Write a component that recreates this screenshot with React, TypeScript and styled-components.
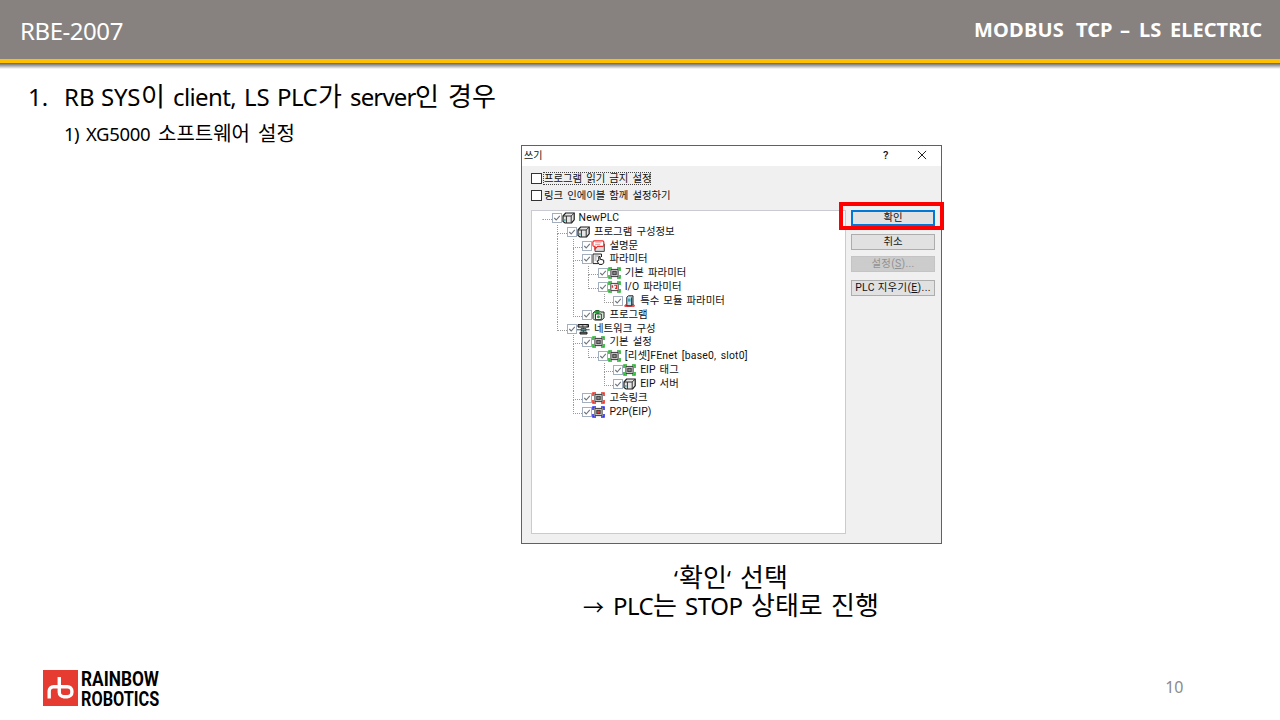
import React from 'react';
import styled, { createGlobalStyle, css } from 'styled-components';

const latin = "'Noto Sans', 'Noto Sans CJK KR', sans-serif";
const hangul = "'Noto Sans CJK KR', 'Noto Sans', sans-serif";
const dialogFont = "Roboto, 'Noto Sans CJK KR', sans-serif";

const GlobalStyle = createGlobalStyle`
  * { box-sizing: border-box; }
  body { margin: 0; background: #fff; }
`;

const Slide = styled.main`
  display: flex;
  flex-direction: column;
  width: 1280px;
  height: 720px;
  overflow: hidden;
  background: #fff;
  color: #000;
  font-family: ${latin};
`;

const Header = styled.header`
  display: flex;
  flex: none;
  justify-content: space-between;
  height: 63px;
  padding: 0 16px 0 20px;
  background: #878280;
  border-bottom: 4px solid #ffc000;
  color: #fff;
`;

const HeaderShadow = styled.div`
  flex: none;
  height: 6px;
  background: linear-gradient(#66625f, #8f8f8f 30%, #d0d0d0 70%, #fff);
`;

const ProductCode = styled.div`
  padding-top: 15px;
  font-size: 24px;
  line-height: 32px;
  letter-spacing: -0.45px;
`;

const DocTitle = styled.h1`
  display: flex;
  margin: 0;
  padding-top: 16px;
  font-size: 20px;
  line-height: 28px;
  font-weight: 700;
`;

const TextLine = styled.div<{ $height: number }>`
  display: flex;
  align-items: baseline;
  height: ${p => p.$height}px;
  line-height: ${p => p.$height}px;
`;

const Word = styled.span<{ $w: number; $size?: number; $ko?: boolean; $ls?: number }>`
  flex: none;
  width: ${p => p.$w}px;
  white-space: nowrap;
  letter-spacing: ${p => p.$ls ?? 0}px;
  ${p => p.$size && css`font-size: ${p.$size}px;`}
  ${p => p.$ko && css`font-family: ${hangul};`}
`;

const Outline = styled.section`
  flex: none;
  height: 76px;
  padding: 8px 0 0 28px;
`;

const SubLine = styled.div`
  padding: 6px 0 0 36px;
`;

const Figure = styled.figure`
  display: flex;
  flex-direction: column;
  flex: none;
  width: 421px;
  margin: 0 0 0 521px;
`;

const Dialog = styled.div`
  display: flex;
  flex-direction: column;
  width: 421px;
  height: 399px;
  background: #f0f0f0;
  border: 1px solid #606068;
  color: #111;
  font: 10.4px/14px ${dialogFont};
  word-spacing: 1.6px;
`;

const TitleBar = styled.div`
  display: flex;
  align-items: center;
  height: 20px;
  padding: 0 14px 2px 2px;
  background: #fff;
`;

const DialogTitle = styled.span`
  flex: 1;
  padding-top: 1px;
  font-size: 10px;
`;

const HelpMark = styled.span`
  width: 34px;
  padding-top: 2px;
  font-size: 11px;
  font-weight: 500;
`;

const Options = styled.div`
  display: flex;
  flex-direction: column;
  gap: 3.6px;
  height: 44px;
  padding: 6px 0 0 9px;
`;

const Option = styled.label`
  display: flex;
  align-items: center;
  gap: 1px;
  height: 13.4px;
`;

const OptionText = styled.span<{ $focus?: boolean }>`
  height: 13px;
  padding: 0 0 0 1px;
  line-height: 14px;
  white-space: nowrap;
  letter-spacing: -0.05px;
  outline: ${p => (p.$focus ? '1px dotted #444' : 'none')};
  outline-offset: -1px;
`;

const EmptyBox = styled.span`
  width: 11px;
  height: 11px;
  background: #fff;
  border: 1px solid #333;
`;

const DialogMain = styled.div`
  display: flex;
  gap: 5px;
  padding-left: 9px;
`;

const Tree = styled.div`
  width: 315px;
  height: 324px;
  padding: 0 0 0 10px;
  background: #fff;
  border: 1px solid #c9cad2;
`;

const TreeRow = styled.div`
  display: flex;
  align-items: center;
  height: 13.83px;
  white-space: nowrap;
`;

const Guide = styled.span<{ $kind: string }>`
  flex: none;
  display: flex;
  flex-direction: column;
  width: ${p => (' |'.includes(p.$kind) ? 15.4 : 9.6)}px;
  height: 13.83px;
  &::before {
    content: '';
    height: 8px;
    border-left: 1px dotted ${p => (' -'.includes(p.$kind) ? 'transparent' : '#999')};
    border-bottom: 1px dotted ${p => (' |'.includes(p.$kind) ? 'transparent' : '#999')};
  }
  &::after {
    content: '';
    flex: 1;
    border-left: 1px dotted ${p => ('|+'.includes(p.$kind) ? '#999' : 'transparent')};
  }
`;

const NodeLabel = styled.span<{ $ls?: number }>`
  padding-left: 4px;
  letter-spacing: ${p => p.$ls ?? 0}px;
`;

const Glyph = styled.svg`
  flex: none;
  display: block;
`;

const Actions = styled.div`
  position: relative;
  display: flex;
  flex-direction: column;
  width: 84px;
`;

const Button = styled.button<{ $primary?: boolean; $top?: number; $ls?: number }>`
  height: 16px;
  margin: ${p => p.$top ?? 0}px 0 0;
  padding: 0;
  background: #e1e1e1;
  border: ${p => (p.$primary ? '2px solid #0078d7' : '1px solid #adadad')};
  color: #111;
  font: inherit;
  letter-spacing: ${p => p.$ls ?? 0}px;
  line-height: ${p => (p.$primary ? 10 : 12)}px;
  white-space: nowrap;
  &:disabled {
    background: #ccc;
    border-color: #c4c4c4;
    color: #929292;
  }
`;

const Highlight = styled.span`
  position: absolute;
  top: -8px;
  left: -12px;
  width: 105px;
  height: 28px;
  border: 4px solid #f00;
  pointer-events: none;
`;

const Caption = styled.figcaption`
  padding: 18px 0 0 62px;
  font-size: 24px;
`;

const CaptionFirst = styled.div`
  padding-left: 91px;
`;

const Footer = styled.footer`
  display: flex;
  justify-content: space-between;
  align-items: flex-start;
  margin-top: auto;
  height: 50px;
  padding: 0 96.5px 0 43px;
`;

const Logo = styled.div`
  display: flex;
  gap: 3px;
`;

const LogoText = styled.div`
  width: 80px;
  margin-top: -1px;
  font: 700 20.8px/20px Roboto, sans-serif;
`;

const LogoWord = styled.div<{ $sx: number }>`
  width: max-content;
  transform: scaleX(${p => p.$sx});
  transform-origin: left;
`;

const PageNumber = styled.div`
  padding-top: 6px;
  font-size: 16px;
  line-height: 22px;
  color: #8b8b8b;
`;

const CheckIcon = () => (
  <Glyph width="10" height="10" viewBox="0 0 10 10" fill="none">
    <rect x="0.5" y="0.5" width="9" height="9" fill="#fff" stroke="#a3afbf" />
    <path d="M2.3 5 4.2 7 7.8 2.8" stroke="#6d747e" strokeWidth="1.1" />
  </Glyph>
);

type IconKind =
  | 'cube' | 'note' | 'param' | 'green' | 'io' | 'device' | 'program' | 'network' | 'red' | 'blue';

const corners = 'M1 4V1H4M9 1h3v3M12 8v3H9M4 11H1V8';

const Chip = ({ edge, core }: { edge: string; core: string }) => (
  <>
    <path d={corners} stroke={edge} strokeWidth="1.6" />
    <rect x="2.9" y="2.4" width="7.2" height="7.2" fill="#d8d8d8" stroke="#3a3a3a" />
    <rect x="4.8" y="4.3" width="3.4" height="3.4" fill={core} stroke="#333" strokeWidth=".9" />
  </>
);

const iconArt: Record<IconKind, React.ReactNode> = {
  cube: (
    <>
      <path d="M1 4 3.6 1h8.6v6.800L9.600 11H3L1 9.500z" fill="#e6e6e6" stroke="#1c1c1c" strokeWidth="1.2" />
      <path d="M1 4h8.200v7M9.200 4l3-3M4.400 4v7" stroke="#333" />
      <path d="M1.800 8h1.800" stroke="#29a3a3" strokeWidth="1.4" />
    </>
  ),
  note: (
    <>
      <path d="M3 4h9.3v7.4H3z" fill="#ddd" stroke="#444" />
      <path
        d="M2.4.8h8.2q1.2 0 1.2 1.2v3.2q0 1.2-1.2 1.2H5.6L3 9V6.4h-.6Q.9 6.4.9 5.2V2Q.9.8 2.4.8z"
        fill="#fff"
        stroke="#f02a2a"
        strokeWidth="1.2"
      />
      <path d="M3.2 2.8h6.2M3.2 4.6h5" stroke="#d88a8a" strokeWidth=".8" />
    </>
  ),
  param: (
    <>
      <path d="M6 10.6H1V1h8.5v3" fill="#f7f7f7" stroke="#222" />
      <path d="M2.6 3h4M2.6 5h2M2.6 7h2" stroke="#777" strokeWidth=".8" />
      <path d="M7.2 11.4 5 8l1.8-.4V3.6h1.3v2.6l3.6 1v2.6l-1.4 1.6z" fill="#fff" stroke="#111" />
    </>
  ),
  green: <Chip edge="#1fb32a" core="#888" />,
  io: (
    <>
      <path d={corners} stroke="#1fb32a" strokeWidth="1.6" />
      <rect x="2.8" y="2.4" width="7.4" height="7.2" fill="#eee" stroke="#444" />
      <path d="M4.4 4.2v2.6M6.2 4.2h2.4v3.2H7" stroke="#d92b2b" strokeWidth="1.1" />
    </>
  ),
  device: (
    <>
      <path d="M1.5 11h10" stroke="#e22" strokeWidth="1.6" />
      <path d="M3.8 2.2 5.5.8H10v8.4l-1.5 1.6H3.8z" fill="#bfe3ee" stroke="#222" />
      <path d="M5 3.6h2.6v3H5z" fill="#3aa6c2" />
      <path d="M8.6 2.4v8.2" stroke="#333" />
      <path d="m2 10.6 1.5-1.8M11.5 10.6 10 8.8" stroke="#e22" />
    </>
  ),
  program: (
    <>
      <path d="M1 4 4 1.500h3L8.500 3H12v5.800L9.800 11H2.500L1 9.500z" fill="#cfe8cf" stroke="#222" />
      <path d="M1.5 3.6 4 1.6h3l1 1.600-1.600 2z" fill="#2a9b3a" />
      <path d="M3.500 5h5.800v5.600H3.500z" fill="#fff" stroke="#333" />
      <circle cx="6.4" cy="7.7" r="1.5" fill="#31a344" />
    </>
  ),
  network: (
    <>
      <path d="M1 1.5h10.500v2.600H1zM3 9.200h7v1.800H3z" fill="#777" stroke="#1c1c1c" />
      <path d="M2.500 2.800h2.300M6.500 2.800h3" stroke="#eee" />
      <path d="M6.300 4.500V9M0 6.700h12.600" stroke="#1f5f5f" strokeWidth="1.1" />
      <path d="M4 5.600h5v2.200H4z" fill="#36a3a0" stroke="#222" strokeWidth=".7" />
    </>
  ),
  red: <Chip edge="#f02a1c" core="#888" />,
  blue: <Chip edge="#2a2af0" core="#e04040" />,
};

const NodeIcon = ({ kind }: { kind: IconKind }) => (
  <Glyph width="13" height="12" viewBox="0 0 13 12" fill="none">{iconArt[kind]}</Glyph>
);

const nodes: { guides: string; icon: IconKind; label: string; ls?: number }[] = [
  { guides: '-', icon: 'cube', label: 'NewPLC', ls: 0.2 },
  { guides: ' +', icon: 'cube', label: '프로그램 구성정보' },
  { guides: ' |+', icon: 'note', label: '설명문' },
  { guides: ' |+', icon: 'param', label: '파라미터' },
  { guides: ' ||+', icon: 'green', label: '기본 파라미터' },
  { guides: ' ||L', icon: 'io', label: 'I/O 파라미터' },
  { guides: ' || L', icon: 'device', label: '특수 모듈 파라미터', ls: -0.03 },
  { guides: ' |L', icon: 'program', label: '프로그램' },
  { guides: ' L', icon: 'network', label: '네트워크 구성' },
  { guides: '  +', icon: 'green', label: '기본 설정' },
  { guides: '  |L', icon: 'green', label: '[리셋]FEnet [base0, slot0]', ls: 0.2 },
  { guides: '  | +', icon: 'green', label: 'EIP 태그' },
  { guides: '  | L', icon: 'cube', label: 'EIP 서버' },
  { guides: '  +', icon: 'red', label: '고속링크' },
  { guides: '  L', icon: 'blue', label: 'P2P(EIP)', ls: 0.1 },
];

export default function App() {
  return (
    <Slide>
      <GlobalStyle />
      <Header>
        <ProductCode>RBE-2007</ProductCode>
        <DocTitle>
          <Word $w={102} $ls={0.2}>MODBUS</Word>
          <Word $w={44}>TCP</Word>
          <Word $w={19}>–</Word>
          <Word $w={31}>LS</Word>
          <Word $w={94} $ls={0.05}>ELECTRIC</Word>
        </DocTitle>
      </Header>
      <HeaderShadow />

      <Outline>
        <TextLine $height={36}>
          <Word $w={36} $size={24}>1.</Word>
          <Word $w={37} $size={24}>RB</Word>
          <Word $w={40} $size={24} $ls={-0.3}>SYS</Word>
          <Word $w={32} $size={26} $ko>이</Word>
          <Word $w={71} $size={24} $ls={-0.6}>client,</Word>
          <Word $w={33} $size={24}>LS</Word>
          <Word $w={41} $size={24} $ls={-0.6}>PLC</Word>
          <Word $w={32} $size={26} $ko>가</Word>
          <Word $w={65} $size={24} $ls={-0.85}>server</Word>
          <Word $w={33} $size={26} $ko>인</Word>
          <Word $w={50} $size={26} $ko>경우</Word>
        </TextLine>
        <SubLine>
          <TextLine $height={28}>
            <Word $w={22} $size={18.5} $ls={-0.5}>1)</Word>
            <Word $w={72} $size={18.5} $ls={-0.35}>XG5000</Word>
            <Word $w={100} $size={20} $ko>소프트웨어</Word>
            <Word $w={40} $size={20} $ko>설정</Word>
          </TextLine>
        </SubLine>
      </Outline>

      <Figure>
        <Dialog>
          <TitleBar>
            <DialogTitle>쓰기</DialogTitle>
            <HelpMark>?</HelpMark>
            <Glyph width="10" height="10" viewBox="0 0 11 11">
              <path d="m1 1 9 9M10 1 1 10" stroke="#222" strokeWidth="1.1" />
            </Glyph>
          </TitleBar>
          <Options>
            <Option><EmptyBox /><OptionText $focus>프로그램 읽기 금지 설정</OptionText></Option>
            <Option><EmptyBox /><OptionText>링크 인에이블 함께 설정하기</OptionText></Option>
          </Options>
          <DialogMain>
            <Tree>
              {nodes.map((n, i) => (
                <TreeRow key={i}>
                  {n.guides.split('').map((g, j) => <Guide key={j} $kind={g} />)}
                  <CheckIcon />
                  <NodeIcon kind={n.icon} />
                  <NodeLabel $ls={n.ls}>{n.label}</NodeLabel>
                </TreeRow>
              ))}
            </Tree>
            <Actions>
              <Button $primary>확인</Button>
              <Button $top={8}>취소</Button>
              <Button $top={6} $ls={0.3} disabled>설정(<u>S</u>)...</Button>
              <Button $top={8} $ls={0.35}>PLC 지우기(<u>E</u>)...</Button>
              <Highlight />
            </Actions>
          </DialogMain>
        </Dialog>
        <Caption>
          <CaptionFirst>
            <TextLine $height={28}>
              <Word $w={5} $size={22}>‘</Word>
              <Word $w={48} $size={26} $ko>확인</Word>
              <Word $w={13} $size={22}>‘</Word>
              <Word $w={50} $size={26} $ko>선택</Word>
            </TextLine>
          </CaptionFirst>
          <TextLine $height={28}>
            <Word $w={30} $size={21} $ko>→</Word>
            <Word $w={40} $ls={-0.5}>PLC</Word>
            <Word $w={32} $size={26} $ko>는</Word>
            <Word $w={66} $ls={-0.4}>STOP</Word>
            <Word $w={80} $size={26} $ko>상태로</Word>
            <Word $w={48} $size={26} $ko>진행</Word>
          </TextLine>
        </Caption>
      </Figure>

      <Footer>
        <Logo>
          <Glyph width="35" height="36" viewBox="0 0 35 36" fill="none">
            <rect width="35" height="36" fill="#e63b30" />
            <path
              d="M6.2 28.5V21a4.3 4.3 0 0 1 4.3-4.3h14a4.4 4.4 0 0 1 4.4 4.4v1.2a4.4 4.4 0 0 1-4.4 4.4h-3.8a4.4 4.4 0 0 1-4.4-4.4V7"
              stroke="#fff"
              strokeWidth="3.4"
            />
          </Glyph>
          <LogoText>
            <LogoWord $sx={0.83}>RAINBOW</LogoWord>
            <LogoWord $sx={0.782}>ROBOTICS</LogoWord>
          </LogoText>
        </Logo>
        <PageNumber>10</PageNumber>
      </Footer>
    </Slide>
  );
}
